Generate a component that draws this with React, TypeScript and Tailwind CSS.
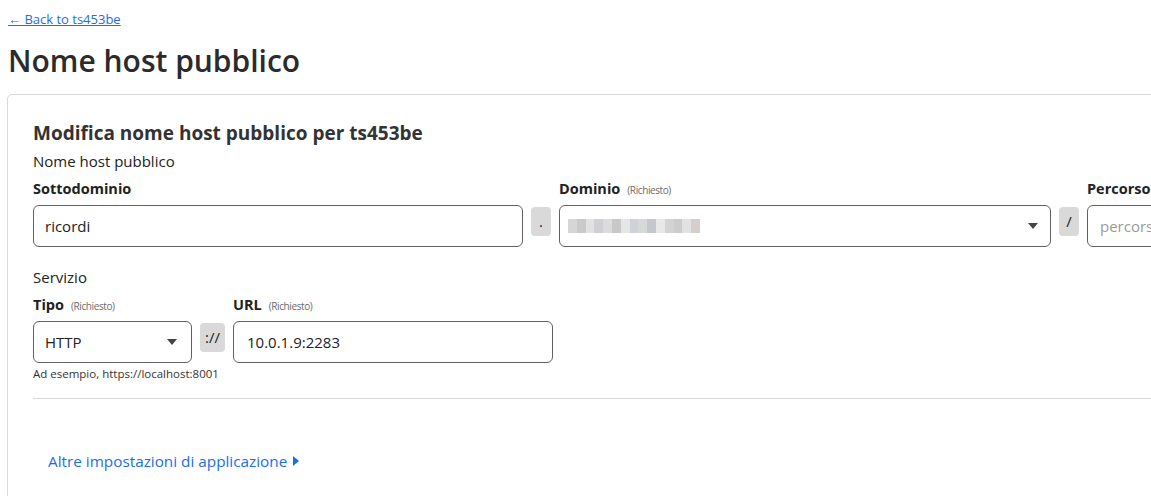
const Label = ({ text, required }: { text: string; required?: boolean }) => (
  <div className="flex items-baseline gap-[7px] h-[30px] leading-[28px]">
    <span className="text-[14.5px] font-bold text-[#222]">{text}</span>
    {required && <span className="text-[10px] text-[#6b6b6b] tracking-[-0.4px]">(Richiesto)</span>}
  </div>
);

const Sep = ({ text, w }: { text: string; w: string }) => (
  <div className="flex flex-col shrink-0">
    <div className="h-[32px]" />
    <div className={`flex items-center justify-center h-[29px] ${w} rounded-[4px] bg-[#d9d9d9] text-[15px] text-[#222]`}>
      {text}
    </div>
  </div>
);

const Caret = () => (
  <svg width="10" height="6" viewBox="0 0 10 6" className="shrink-0">
    <path d="M0 0 L10 0 L5 6 Z" fill="#444" />
  </svg>
);

export default function App() {
  return (
    <div className="h-[496px] w-[1151px] overflow-hidden bg-white text-[#313131]" style={{ fontFamily: '"Open Sans", "Noto Sans", sans-serif' }}>
      <div className="pl-[8px] pt-[10px]">
        <a href="#" className="block text-[13px] leading-[18px] text-[#1a6cf0] underline">← Back to ts453be</a>
        <h1 className="mt-[15px] text-[30px] font-semibold leading-[36px] text-[#2b2b2b]">Nome host pubblico</h1>
      </div>
      <div className="ml-[7px] mt-[15px] w-[1200px] rounded-[5px] border border-[#d9d9d9] pl-[25px] pt-[24px] pb-[80px]">
        <h2 className="text-[19px] font-bold leading-[28px] text-[#333]">Modifica nome host pubblico per ts453be</h2>
        <div className="text-[15px] leading-[28px] text-[#222]">Nome host pubblico</div>
        <div className="flex gap-[8px]">
          <div className="w-[490px] shrink-0">
            <Label text="Sottodominio" />
            <div className="h-[42px] rounded-[6px] border border-[#616161] px-[11px] flex items-center text-[15px] text-[#222]">ricordi</div>
          </div>
          <Sep text="." w="w-[20px]" />
          <div className="w-[492px] shrink-0">
            <Label text="Dominio" required />
            <div className="h-[42px] rounded-[6px] border border-[#616161] pl-[8px] pr-[12px] flex items-center justify-between">
              <div className="flex h-[14px] w-[132px]">
                {["#d6d6d6", "#c9c9cc", "#e1e1e1", "#cfcfd4", "#dcdcdc", "#c8c8c8", "#e6e6e6", "#cfd3d8", "#d8d8d8", "#c4c8cc", "#e8e8e8", "#d3d3d6", "#cccccc", "#e2e2e2", "#d4cfcc"].map((c, i) => (
                  <div key={i} className="flex-1" style={{ background: c }} />
                ))}
              </div>
              <Caret />
            </div>
          </div>
          <Sep text="/" w="w-[20px]" />
          <div className="w-[200px] shrink-0">
            <Label text="Percorso" />
            <div className="h-[42px] rounded-[6px] border border-[#616161] px-[12px] flex items-center text-[15px] text-[#9a9a9a]">percorso</div>
          </div>
        </div>
        <div className="mt-[18px] text-[15px] leading-[24px] text-[#222]">Servizio</div>
        <div className="mt-[2px] flex gap-[8px]">
          <div className="w-[159px] shrink-0">
            <Label text="Tipo" required />
            <div className="h-[42px] rounded-[6px] border border-[#616161] pl-[11px] pr-[14px] flex items-center justify-between text-[15px] text-[#222]">
              HTTP
              <Caret />
            </div>
          </div>
          <Sep text="://" w="w-[25px]" />
          <div className="w-[320px] shrink-0">
            <Label text="URL" required />
            <div className="h-[42px] rounded-[6px] border border-[#616161] px-[13px] flex items-center text-[15px] text-[#222]">10.0.1.9:2283</div>
          </div>
        </div>
        <div className="mt-[3px] text-[11.5px] leading-[16px] text-[#333]">Ad esempio, https://localhost:8001</div>
        <div className="mt-[16px] border-t border-[#d9d9d9]" />
        <div className="mt-[51px] ml-[15px] flex items-center gap-[6px] text-[15.3px] leading-[22px] text-[#1a6cf0]">
          Altre impostazioni di applicazione
          <svg width="6" height="10" viewBox="0 0 6 10"><path d="M0 0 L6 5 L0 10 Z" fill="#1a6cf0" /></svg>
        </div>
      </div>
    </div>
  );
}
